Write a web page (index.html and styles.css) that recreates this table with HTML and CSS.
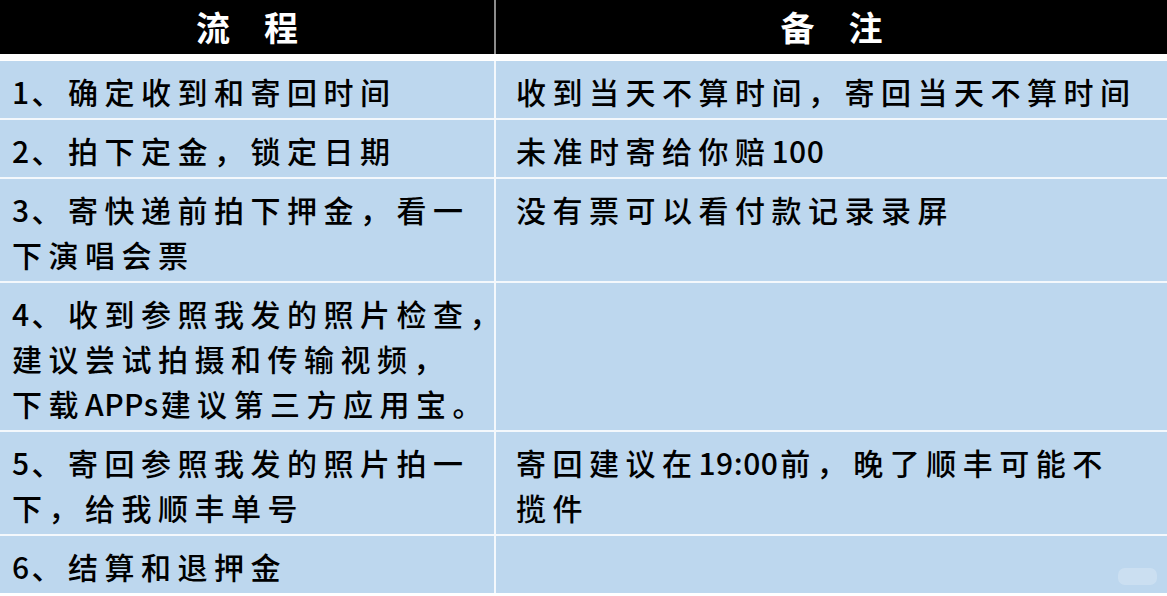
FILE: index.html
```html
<!DOCTYPE html>
<html lang="zh-CN">
<head>
<meta charset="utf-8">
<title>流程 备注</title>
<link rel="stylesheet" href="styles.css">
</head>
<body>
<div class="sheet">
  <div class="head">
    <div class="hcell">流　程</div>
    <div class="hcell">备　注</div>
  </div>
  <div class="rows">
    <div class="cell step"><span class="lat">1</span>、确定收到和寄回时间</div>
    <div class="cell note">收到当天不算时间，寄回当天不算时间</div>

    <div class="cell step"><span class="lat">2</span>、拍下定金，锁定日期</div>
    <div class="cell note">未准时寄给你赔<span class="lat">100</span></div>

    <div class="cell step"><span class="lat">3</span>、寄快递前拍下押金，看一下演唱会票</div>
    <div class="cell note">没有票可以看付款记录录屏</div>

    <div class="cell step keep"><span class="lat">4</span>、收到参照我发的照片检查，<br>建议尝试拍摄和传输视频，<br>下载<span class="lat">APPs</span>建议第三方应用宝。</div>
    <div class="cell note"></div>

    <div class="cell step"><span class="lat">5</span>、寄回参照我发的照片拍一下，给我顺丰单号</div>
    <div class="cell note">寄回建议在<span class="lat">19:00</span>前，晚了顺丰可能不<br>揽件</div>

    <div class="cell step"><span class="lat">6</span>、结算和退押金</div>
    <div class="cell note"></div>
  </div>
  <div class="mark"></div>
</div>
</body>
</html>
```

FILE: styles.css
```css
html, body {
  margin: 0;
  padding: 0;
  background: #ffffff;
}

.sheet {
  position: relative;
  width: 1167px;
  height: 596px;
  overflow: hidden;
  background: #ffffff;
  font-family: "Noto Sans CJK SC", "Noto Sans", sans-serif;
}

.head {
  display: grid;
  grid-template-columns: 494px 1fr;
  column-gap: 2px;
  height: 54px;
  background: #8c8c8c;
}

.hcell {
  background: #000000;
  color: #ffffff;
  font-size: 34px;
  font-weight: 700;
  display: flex;
  align-items: center;
  justify-content: center;
  line-height: 1;
}

.rows {
  display: grid;
  grid-template-columns: 494px 1fr;
  gap: 2px;
  margin-top: 7px;
  background: #f4f8fc;
}

.cell {
  background: #bdd7ee;
  color: #000000;
  font-size: 30px;
  font-weight: 500;
  line-height: 45px;
  letter-spacing: 6.5px;
  padding: 8px 0 4px;
  min-height: 45px;
}

.lat {
  letter-spacing: 0.5px;
  margin-right: 2px;
}

.step {
  padding-left: 12px;
}

.keep {
  white-space: nowrap;
}

.note {
  padding-left: 20px;
  padding-right: 10px;
}

.mark {
  position: absolute;
  left: 1118px;
  top: 568px;
  width: 39px;
  height: 17px;
  border-radius: 7px;
  background: rgba(255, 255, 255, 0.22);
}
```
